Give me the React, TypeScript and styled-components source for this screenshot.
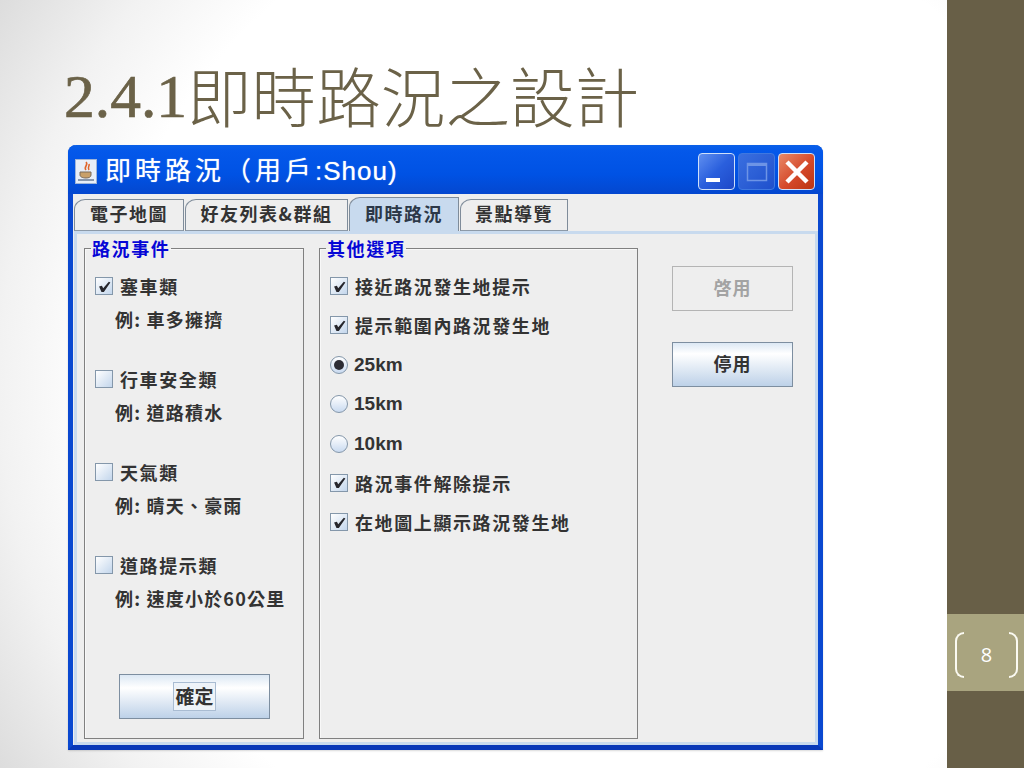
import React from 'react';
import styled, { createGlobalStyle } from 'styled-components';

const GlobalStyle = createGlobalStyle`
  html, body {
    margin: 0;
    padding: 0;
    background: #fff;
  }
`;

const CJK = `"Noto Sans CJK TC", "Liberation Sans", sans-serif`;

const Slide = styled.div`
  display: flex;
  width: 1024px;
  height: 768px;
  overflow: hidden;
  font-family: ${CJK};
`;

const Main = styled.div`
  width: 947px;
  height: 768px;
  box-sizing: border-box;
  padding-left: 65px;
  background: radial-gradient(circle 715px at 600px 384px, #ffffff 70%, #f2f2f2 84%, #dcdcdc 100%);
`;

const Title = styled.h1`
  margin: 0;
  height: 145px;
  box-sizing: border-box;
  padding-top: 49px;
  font-size: 64.6px;
  line-height: 90px;
  font-weight: 300;
  color: #6b6248;
  white-space: nowrap;
`;

const TitleNumber = styled.span`
  font-family: "Liberation Serif", serif;
  font-size: 61.5px;
  font-weight: 400;
  vertical-align: 5px;
  margin-left: -1px;
  -webkit-text-stroke: 0.7px #6b6248;
`;

const Sidebar = styled.div`
  flex: 1;
  background: #685f47;
  padding-top: 614px;
`;

const PageBox = styled.div`
  height: 77px;
  display: flex;
  align-items: center;
  justify-content: space-between;
  box-sizing: border-box;
  padding: 4px 6px 0 8px;
  background: #a9a47f;
  color: #fff;
  font-family: "Open Sans", sans-serif;
  font-size: 20px;
`;

const Bracket = styled.div<{ $side: 'left' | 'right' }>`
  width: 9px;
  height: 46px;
  box-sizing: border-box;
  border: 2px solid #fbfaf2;
  border-${(p) => (p.$side === 'left' ? 'right' : 'left')}: none;
  border-radius: ${(p) => (p.$side === 'left' ? '9px 0 0 9px' : '0 9px 9px 0')};
`;

const Window = styled.div`
  margin-left: 3px;
  width: 755px;
  height: 605px;
  box-sizing: border-box;
  display: flex;
  flex-direction: column;
  border: solid #0a48d0;
  border-width: 0 5px 5px;
  border-bottom-color: #0838b8;
  border-radius: 8px 8px 0 0;
  background: #eeeeee;
  box-shadow: 0 1px 2px rgba(0, 0, 0, 0.15);
`;

const TitleBar = styled.div`
  height: 49px;
  margin: 0 -5px;
  padding: 4px 8px 0 7px;
  box-sizing: border-box;
  display: flex;
  align-items: center;
  border-radius: 8px 8px 0 0;
  background: linear-gradient(#0a60e8 0%, #0458ea 12%, #0052e4 60%, #0447cf 100%);
`;

const WindowName = styled.div`
  margin: -3px 0 0 8px;
  flex: 1;
  color: #fff;
  font-size: 26px;
  line-height: 45px;
  letter-spacing: 4px;
  white-space: nowrap;
  text-shadow: 0 0 1px rgba(255, 255, 255, 0.7);
`;

const NameTail = styled.span`
  font-size: 26px;
  letter-spacing: 1px;
  font-family: "Liberation Sans", sans-serif;
`;

const WinButton = styled.div<{ $kind: 'min' | 'max' | 'close' }>`
  width: 37px;
  height: 37px;
  margin-left: 3px;
  box-sizing: border-box;
  display: flex;
  align-items: center;
  justify-content: center;
  border-radius: 4px;
  border: 1px solid ${(p) => (p.$kind === 'max' ? '#3f78e0' : '#cfe0fa')};
  background: ${(p) =>
    p.$kind === 'close'
      ? 'linear-gradient(135deg, #e98a68, #d5492a 55%, #bb3512)'
      : p.$kind === 'max'
        ? 'linear-gradient(135deg, #3a6fe0, #1f50cc)'
        : 'linear-gradient(135deg, #5f8ff0, #2a5fdd 50%, #1d48c8)'};
`;

const TabRow = styled.div`
  height: 37px;
  display: flex;
  align-items: flex-end;
  padding-left: 1px;
  gap: 1px;
`;

const Tab = styled.div<{ $active?: boolean; $width: number }>`
  box-sizing: border-box;
  height: ${(p) => (p.$active ? '34px' : '32px')};
  padding: 0 0 4px;
  width: ${(p) => p.$width}px;
  display: flex;
  align-items: center;
  justify-content: center;
  font-size: 18px;
  font-weight: 700;
  letter-spacing: 1.5px;
  color: ${(p) => (p.$active ? '#2c3848' : '#333')};
  background: ${(p) => (p.$active ? '#c8daee' : '#eeeeee')};
  border: 1px solid #7f8c9a;
  border-bottom: ${(p) => (p.$active ? 'none' : '1px solid #8d9aa8')};
  border-top-left-radius: 11px 10px;
`;

const TabPanel = styled.div`
  flex: 1;
  margin-left: 1px;
  min-height: 0;
  display: flex;
  box-sizing: border-box;
  border: 3px solid #c8daee;
  padding: 2px 0 3px 7px;
  background: #eeeeee;
`;

const Group = styled.fieldset<{ $width: number }>`
  margin: 0;
  width: ${(p) => p.$width}px;
  box-sizing: border-box;
  display: flex;
  flex-direction: column;
  border: 1px solid #808080;
  box-shadow: inset 1px 1px 0 #f8f8f8;
  padding: 16px 0 19px 10px;
`;

const GroupTitle = styled.legend`
  padding: 0 1px;
  margin-left: -4px;
  font-size: 18px;
  line-height: 24px;
  font-weight: 700;
  letter-spacing: 1.6px;
  color: #0606d6;
`;

const Rows = styled.div`
  display: flex;
  flex-direction: column;
  gap: 19.4px;
`;

const Item = styled.div`
  display: flex;
  flex-direction: column;
  gap: 13px;
  margin-bottom: 40px;
`;

const Row = styled.div`
  height: 20px;
  display: flex;
  align-items: center;
  gap: 7px;
  font-size: 18px;
  font-weight: 700;
  letter-spacing: 1.6px;
  color: #333;
  white-space: nowrap;
`;

const Example = styled(Row)`
  padding-left: 20px;
  letter-spacing: 1.2px;
`;

const Km = styled.span`
  font-family: "Liberation Sans", sans-serif;
  font-size: 19px;
  letter-spacing: 0;
  margin-left: -1px;
`;

const Box = styled.div`
  width: 18px;
  height: 18px;
  box-sizing: border-box;
  flex: none;
  display: flex;
  align-items: center;
  justify-content: center;
  border: 1px solid #8497aa;
  background: linear-gradient(135deg, #ffffff, #c3d6ec);
`;

const Radio = styled.div`
  width: 18px;
  height: 18px;
  box-sizing: border-box;
  flex: none;
  display: flex;
  align-items: center;
  justify-content: center;
  border-radius: 50%;
  border: 1px solid #8497aa;
  background: linear-gradient(#ffffff, #c9daf0);
`;

const RadioDot = styled.div`
  width: 10px;
  height: 10px;
  border-radius: 50%;
  background: #2c2c34;
`;

const OkButton = styled.div`
  margin: auto 0 0 24px;
  width: 151px;
  height: 45px;
  box-sizing: border-box;
  display: flex;
  align-items: center;
  justify-content: center;
  border: 1px solid #7d8ea0;
  background: linear-gradient(#dce8f4, #ffffff 30%, #bdd1e8);
`;

const FocusRing = styled.span`
  padding: 0 1px;
  height: 29px;
  line-height: 25px;
  box-sizing: border-box;
  border: 1px solid #a9bcd2;
  background: #eef3f8;
  font-size: 19px;
  font-weight: 700;
  color: #333;
`;

const Actions = styled.div`
  margin-left: 34px;
  padding-top: 30px;
  display: flex;
  flex-direction: column;
  gap: 31px;
`;

const ActionButton = styled.div<{ $disabled?: boolean }>`
  width: 121px;
  height: 45px;
  box-sizing: border-box;
  padding-bottom: 4px;
  display: flex;
  align-items: center;
  justify-content: center;
  font-size: 18px;
  font-weight: 700;
  letter-spacing: 1px;
  color: ${(p) => (p.$disabled ? '#a3a3a3' : '#333')};
  border: 1px solid ${(p) => (p.$disabled ? '#b4b4b4' : '#7d8ea0')};
  background: ${(p) => (p.$disabled ? '#eeeeee' : 'linear-gradient(#dce8f4, #ffffff 25%, #bdd1e8)')};
`;

const Gap = styled.div`
  width: 15px;
  flex: none;
`;

const CheckMark = () => (
  <svg width="13" height="13" viewBox="0 0 12 12">
    <path d="M1 6 L3.6 5.4 L4.8 7.6 L10 1.6 L11.4 2.4 L5.4 11 L3.2 11 Z" fill="#26262c" />
  </svg>
);

const CheckRow: React.FC<{ label: string; checked?: boolean }> = ({ label, checked }) => (
  <Row>
    <Box>{checked && <CheckMark />}</Box>
    {label}
  </Row>
);

const RadioRow: React.FC<{ label: string; checked?: boolean }> = ({ label, checked }) => (
  <Row>
    <Radio>{checked && <RadioDot />}</Radio>
    <Km>{label}</Km>
  </Row>
);

const JavaIcon = () => (
  <svg width="22" height="25" viewBox="0 0 22 25">
    <rect x="0.5" y="0.5" width="21" height="24" fill="#e8eef8" stroke="#9fb4d8" />
    <path d="M11 3c3 3-3 5 0 8M14 5c1 2-2 3 0 6" fill="none" stroke="#e0642a" strokeWidth="1.6" />
    <path d="M5 13h11v3c0 2-2 3-5 3s-6-1-6-3z" fill="#c9a06a" stroke="#7a6a5a" />
    <path d="M3 21h16" stroke="#6a7a94" strokeWidth="1.5" />
  </svg>
);

const MinGlyph = () => (
  <svg width="35" height="35" viewBox="0 0 35 35">
    <rect x="7" y="24" width="14" height="4" fill="#fff" />
  </svg>
);

const MaxGlyph = () => (
  <svg width="22" height="22" viewBox="0 0 22 22">
    <rect x="1.5" y="2.5" width="19" height="17" fill="none" stroke="#6d94e6" strokeWidth="1.5" />
    <rect x="1" y="2" width="20" height="3" fill="#6d94e6" />
  </svg>
);

const CloseGlyph = () => (
  <svg width="26" height="26" viewBox="0 0 26 26">
    <path d="M3 3 L23 23 M23 3 L3 23" stroke="#fff" strokeWidth="4.5" />
  </svg>
);

const traffic = [
  { name: '塞車類', example: '例: 車多擁擠', checked: true },
  { name: '行車安全類', example: '例: 道路積水' },
  { name: '天氣類', example: '例: 晴天、豪雨' },
  { name: '道路提示類', example: '例: 速度小於60公里' },
];

export default function App() {
  return (
    <Slide>
      <GlobalStyle />
      <Main>
        <Title>
          <TitleNumber>2.4.1</TitleNumber>即時路況之設計
        </Title>
        <Window>
          <TitleBar>
            <JavaIcon />
            <WindowName>
              即時路況（用戶<NameTail>:Shou)</NameTail>
            </WindowName>
            <WinButton $kind="min"><MinGlyph /></WinButton>
            <WinButton $kind="max"><MaxGlyph /></WinButton>
            <WinButton $kind="close"><CloseGlyph /></WinButton>
          </TitleBar>
          <TabRow>
            <Tab $width={110}>電子地圖</Tab>
            <Tab $width={163}>好友列表&amp;群組</Tab>
            <Tab $width={110} $active>即時路況</Tab>
            <Tab $width={108}>景點導覽</Tab>
          </TabRow>
          <TabPanel>
            <Group $width={220}>
              <GroupTitle>路況事件</GroupTitle>
              {traffic.map((t) => (
                <Item key={t.name}>
                  <CheckRow label={t.name} checked={t.checked} />
                  <Example>{t.example}</Example>
                </Item>
              ))}
              <OkButton>
                <FocusRing>確定</FocusRing>
              </OkButton>
            </Group>
            <Gap />
            <Group $width={319}>
              <GroupTitle>其他選項</GroupTitle>
              <Rows>
                <CheckRow label="接近路況發生地提示" checked />
                <CheckRow label="提示範圍內路況發生地" checked />
                <RadioRow label="25km" checked />
                <RadioRow label="15km" />
                <RadioRow label="10km" />
                <CheckRow label="路況事件解除提示" checked />
                <CheckRow label="在地圖上顯示路況發生地" checked />
              </Rows>
            </Group>
            <Actions>
              <ActionButton $disabled>啓用</ActionButton>
              <ActionButton>停用</ActionButton>
            </Actions>
          </TabPanel>
        </Window>
      </Main>
      <Sidebar>
        <PageBox>
          <Bracket $side="left" />
          8
          <Bracket $side="right" />
        </PageBox>
      </Sidebar>
    </Slide>
  );
}
